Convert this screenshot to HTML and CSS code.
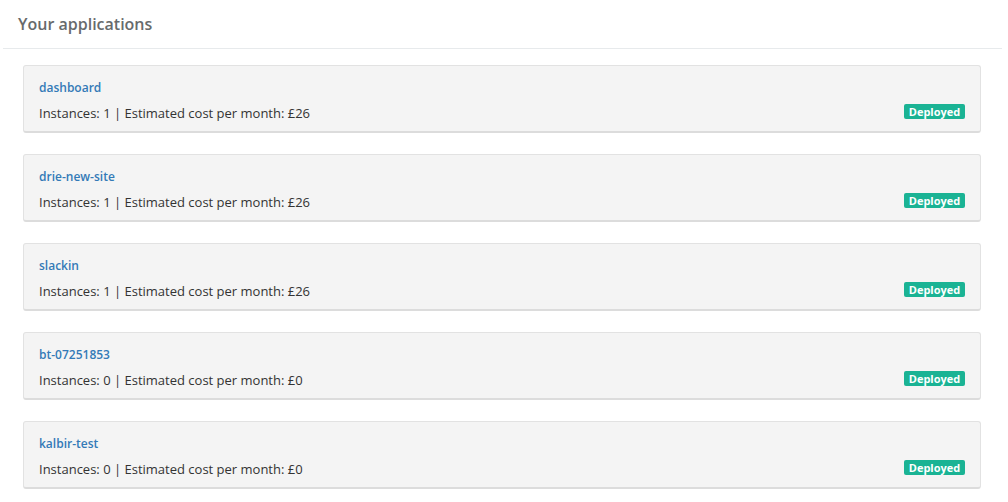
FILE: index.html
```html
<!DOCTYPE html>
<html>
<head>
<meta charset="utf-8">
<link rel="stylesheet" href="styles.css">
</head>
<body>
<div class="page">
  <div class="header"><h2 class="title">Your applications</h2></div>
  <div class="list">
    <div class="card">
      <a class="name" href="#">dashboard</a>
      <div class="row"><span class="info">Instances: 1 | Estimated cost per month: £26</span><span class="badge">Deployed</span></div>
    </div>
    <div class="card">
      <a class="name" href="#">drie-new-site</a>
      <div class="row"><span class="info">Instances: 1 | Estimated cost per month: £26</span><span class="badge">Deployed</span></div>
    </div>
    <div class="card">
      <a class="name" href="#">slackin</a>
      <div class="row"><span class="info">Instances: 1 | Estimated cost per month: £26</span><span class="badge">Deployed</span></div>
    </div>
    <div class="card">
      <a class="name" href="#">bt-07251853</a>
      <div class="row"><span class="info">Instances: 0 | Estimated cost per month: £0</span><span class="badge">Deployed</span></div>
    </div>
    <div class="card">
      <a class="name" href="#">kalbir-test</a>
      <div class="row"><span class="info">Instances: 0 | Estimated cost per month: £0</span><span class="badge">Deployed</span></div>
    </div>
  </div>
</div>
</body>
</html>
```
FILE: styles.css
```css
* { box-sizing: border-box; }
html, body { margin: 0; padding: 0; background: #ffffff; }
body { font-family: "Open Sans", "Liberation Sans", sans-serif; font-size: 13px; color: #333333; }
.page { margin: 0 6px 0 3px; }
.header { height: 49px; border-bottom: 1px solid #e7eaec; padding: 0 15px; display: flex; align-items: center; }
.title { margin: 0; font-size: 16px; font-weight: 600; color: #676a6c; line-height: 20px; }
.list { padding: 16px 21px 0 20px; display: flex; flex-direction: column; gap: 21px; }
.card { background: #f4f4f4; border: 1px solid #e2e2e2; border-bottom: 2px solid #dcdcdc; border-radius: 3px; padding: 13px 15px 0 15px; height: 68px; }
.name { display: block; color: #337ab7; font-weight: 600; font-size: 12px; line-height: 18px; text-decoration: none; }
.row { display: flex; justify-content: space-between; align-items: flex-start; margin-top: 7px; height: 18px; }
.info { line-height: 18px; }
.badge { background: #1ab394; color: #ffffff; font-size: 11px; font-weight: 700; line-height: 15px; height: 15px; width: 61px; text-align: center; border-radius: 2px; }
```
